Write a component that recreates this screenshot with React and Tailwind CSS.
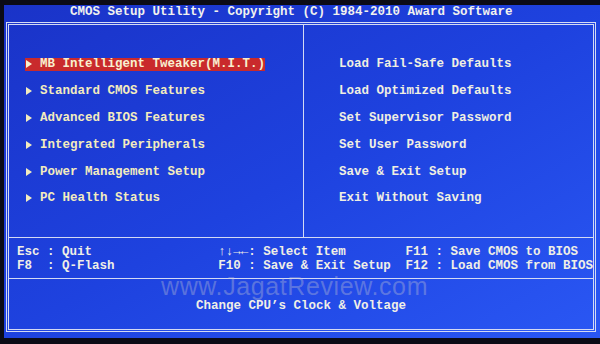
const leftItems = [
  "MB Intelligent Tweaker(M.I.T.)",
  "Standard CMOS Features",
  "Advanced BIOS Features",
  "Integrated Peripherals",
  "Power Management Setup",
  "PC Health Status",
];

const rightItems = [
  "Load Fail-Safe Defaults",
  "Load Optimized Defaults",
  "Set Supervisor Password",
  "Set User Password",
  "Save & Exit Setup",
  "Exit Without Saving",
];

const keys = [
  ["Esc : Quit", "F8  : Q-Flash"],
  ["\u2191\u2193\u2192\u2190: Select Item", "F10 : Save & Exit Setup"],
  ["F11 : Save CMOS to BIOS", "F12 : Load CMOS from BIOS"],
];

const Arrow = () => (
  <span className="w-[15px] flex items-center shrink-0">
    <svg width="7" height="8" viewBox="0 0 7 8" className="ml-[1px]">
      <polygon points="0,0 6,4 0,8" fill="currentColor" />
    </svg>
  </span>
);

export default function App() {
  return (
    <div
      className="w-[600px] h-[344px] bg-[#0b0b16] overflow-hidden pt-[5px] pl-[4px] font-bold text-[12.5px]"
      style={{ fontFamily: '"Liberation Mono", "DejaVu Sans Mono", monospace' }}
    >
      <div className="w-[596px] h-[333px] bg-linear-to-br from-[#1a33c8] via-[#1e42df] to-[#2a57f4]">
        {/* title */}
        <div className="h-[17px] pl-[66px] leading-[14px] text-[#f2f2ee] whitespace-pre">
          CMOS Setup Utility - Copyright (C) 1984-2010 Award Software
        </div>

        {/* frame */}
        <div className="ml-[2px] w-[590px] h-[310px] border-[3px] border-double border-[#d4daf4] flex flex-col">
          <div className="h-[212px] flex">
            <div className="w-[295px] border-r border-[#d4daf4] pt-[26px] pl-[16px] text-[#f3ecbe]">
              {leftItems.map((item, i) => (
                <div key={item} className="h-[26.8px] flex items-center">
                  <span
                    className={`flex items-center h-[13px] leading-[14px] whitespace-pre ${
                      i === 0 ? "bg-[#c92a2c] text-[#f8f0d0]" : ""
                    }`}
                  >
                    <Arrow />
                    {item}
                  </span>
                </div>
              ))}
            </div>
            <div className="flex-1 pt-[26px] pl-[35px] text-[#f0efe2]">
              {rightItems.map((item) => (
                <div key={item} className="h-[26.8px] flex items-center leading-[14px] whitespace-pre">
                  {item}
                </div>
              ))}
            </div>
          </div>

          {/* key help */}
          <div className="h-[41px] border-t border-[#d4daf4] pt-[7px] pl-[8px] flex text-[#f0efe6] leading-[14px] whitespace-pre">
            <div className="w-[202px]">
              <div>{keys[0][0]}</div>
              <div>{keys[0][1]}</div>
            </div>
            <div className="w-[188px]">
              <div>{keys[1][0]}</div>
              <div>{keys[1][1]}</div>
            </div>
            <div>
              <div>{keys[2][0]}</div>
              <div>{keys[2][1]}</div>
            </div>
          </div>

          {/* item help, watermark sits over it */}
          <div className="relative flex-1 border-t border-[#d4daf4] pt-[20px] text-center leading-[14px] text-[#f0efe6] whitespace-pre">
            <span
              className="absolute left-[152px] top-[-4px] text-[25px] leading-[22px] font-normal tracking-[0.6px] text-[#c8c8d2]/35"
              style={{ fontFamily: '"Liberation Sans", Arial, sans-serif' }}
            >
              www.JagatReview.com
            </span>
            <span className="relative">Change CPU’s Clock &amp; Voltage</span>
          </div>
        </div>
      </div>
    </div>
  );
}
